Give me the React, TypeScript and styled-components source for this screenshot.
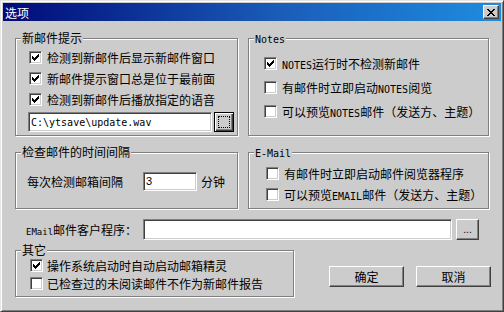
import styled, { createGlobalStyle, css } from 'styled-components'

const FACE = '#cccccc'

const GlobalStyle = createGlobalStyle`
  html, body {
    margin: 0;
    padding: 0;
    background: ${FACE};
  }
  body {
    font-family: "Noto Sans CJK SC", sans-serif;
    font-size: 12px;
    color: #000;
  }
`

const raised = css`
  box-sizing: border-box;
  background: ${FACE};
  border: 1px solid;
  border-color: #fff #404040 #404040 #fff;
  box-shadow: inset -1px -1px 0 #808080, inset 1px 1px 0 ${FACE};
`

const sunken = css`
  box-sizing: border-box;
  background: #fff;
  border: 1px solid;
  border-color: #808080 #fff #fff #808080;
  box-shadow: inset 1px 1px 0 #404040, inset -1px -1px 0 ${FACE};
`

const Window = styled.div`
  width: 504px;
  height: 312px;
  box-sizing: border-box;
  background: ${FACE};
  border: 1px solid;
  border-color: #e4e4e4 #404040 #404040 #e4e4e4;
  box-shadow: inset 1px 1px 0 #fff, inset -1px -1px 0 #808080;
  padding: 2px;
  display: flex;
  flex-direction: column;
`

const TitleBar = styled.div`
  height: 18px;
  flex: none;
  display: flex;
  align-items: center;
  padding: 0 2px 0 2px;
  background: linear-gradient(90deg, #000a78 0%, #1a5cb8 55%, #1e8ce0 100%);
  color: #fff;
  font-size: 12px;
`

const CloseButton = styled.button`
  ${raised};
  width: 16px;
  height: 14px;
  margin-left: auto;
  padding: 0;
  display: flex;
  align-items: center;
  justify-content: center;
`

const Client = styled.div`
  display: flex;
  flex-direction: column;
  padding: 17px 11px 0 12px;
`

const TopGrid = styled.div`
  display: grid;
  grid-template-columns: 223px 241px;
  grid-template-rows: 98px 57px;
  column-gap: 10px;
  row-gap: 16px;
`

const Group = styled.div<{ $pad: string; $width?: number; $height?: number }>`
  position: relative;
  box-sizing: border-box;
  display: flex;
  flex-direction: column;
  padding: ${(p) => p.$pad};
  width: ${(p) => (p.$width ? `${p.$width}px` : 'auto')};
  height: ${(p) => (p.$height ? `${p.$height}px` : 'auto')};
  border: 1px solid #808080;
  box-shadow: 1px 1px 0 #fff, inset 1px 1px 0 #fff;
`

const Legend = styled.span`
  position: absolute;
  top: -7px;
  left: 5px;
  padding: 0 1px;
  background: ${FACE};
  line-height: 12px;
  font-size: 12px;
  white-space: nowrap;
`

const Latin = styled.span<{ $size?: number }>`
  font-family: "DejaVu Sans Mono", "Liberation Mono", monospace;
  font-size: ${(p) => p.$size ?? 10}px;
`

const CheckRow = styled.div<{ $h: number; $gap?: number }>`
  display: flex;
  align-items: center;
  height: ${(p) => p.$h}px;
  gap: ${(p) => p.$gap ?? 5}px;
  white-space: nowrap;
`

const Box = styled.span`
  ${sunken};
  flex: none;
  width: 13px;
  height: 13px;
  display: flex;
  align-items: center;
  justify-content: center;
`

const FileRow = styled.div`
  display: flex;
  align-items: center;
  gap: 2px;
  margin-top: 2px;
  margin-left: -1px;
`

const TextField = styled.input<{ $w: number; $h: number; $mono?: boolean }>`
  ${sunken};
  width: ${(p) => p.$w}px;
  height: ${(p) => p.$h}px;
  margin: 0;
  padding: 0 2px;
  outline: none;
  color: #000;
  font-family: ${(p) =>
    p.$mono ? '"DejaVu Sans Mono", "Liberation Mono", monospace' : '"Liberation Sans", sans-serif'};
  font-size: ${(p) => (p.$mono ? 10 : 11)}px;
`

const FocusButton = styled.button`
  box-sizing: border-box;
  width: 20px;
  height: 20px;
  padding: 0;
  background: ${FACE};
  border: 1px solid #000;
  box-shadow: inset 1px 1px 0 #fff, inset -1px -1px 0 #404040, inset -2px -2px 0 #808080;
  display: flex;
  align-items: center;
  justify-content: center;
`

const FocusRect = styled.span`
  width: 10px;
  height: 10px;
  border: 1px dotted #000;
`

const IntervalRow = styled.div`
  display: flex;
  align-items: center;
  height: 20px;
  white-space: nowrap;
`

const IntervalLabel = styled.span`
  width: 116px;
`

const Unit = styled.span`
  margin-left: 4px;
`

const ClientRow = styled.div`
  display: flex;
  align-items: center;
  margin-top: 10px;
  padding-left: 11px;
  white-space: nowrap;
`

const ClientLabel = styled.span`
  width: 117px;
`

const DotsButton = styled.button`
  ${raised};
  width: 23px;
  height: 21px;
  margin-left: 4px;
  padding: 0 0 4px;
  font-family: "Liberation Sans", sans-serif;
  font-size: 10px;
  line-height: 1;
  display: flex;
  align-items: flex-end;
  justify-content: center;
`

const BottomRow = styled.div`
  display: flex;
  margin-top: 10px;
`

const Actions = styled.div`
  display: flex;
  gap: 12px;
  margin-left: auto;
  margin-top: 16px;
  margin-right: -1px;
  align-self: flex-start;
`

const PushButton = styled.button`
  ${raised};
  width: 75px;
  height: 21px;
  padding: 0;
  font-family: "Noto Sans CJK SC", sans-serif;
  font-size: 12px;
  color: #000;
`

const CheckMark = () => (
  <svg width="7" height="7" viewBox="0 0 7 7" shapeRendering="crispEdges">
    <path
      d="M0 2h1v3H0zM1 3h1v3H1zM2 4h1v3H2zM3 3h1v3H3zM4 2h1v3H4zM5 1h1v3H5zM6 0h1v3H6z"
      fill="#000"
    />
  </svg>
)

const CloseGlyph = () => (
  <svg width="8" height="7" viewBox="0 0 8 7" shapeRendering="crispEdges">
    <path
      d="M0 0h2v1H0zM6 0h2v1H6zM1 1h2v1H1zM5 1h2v1H5zM2 2h4v1H2zM3 3h2v1H3zM2 4h4v1H2zM1 5h2v1H1zM5 5h2v1H5zM0 6h2v1H0zM6 6h2v1H6z"
      fill="#000"
    />
  </svg>
)

const Check = ({
  checked,
  h,
  gap,
  children,
}: {
  checked?: boolean
  h: number
  gap?: number
  children: React.ReactNode
}) => (
  <CheckRow $h={h} $gap={gap}>
    <Box>{checked && <CheckMark />}</Box>
    <span>{children}</span>
  </CheckRow>
)

export default function App() {
  return (
    <>
      <GlobalStyle />
      <Window>
        <TitleBar>
          选项
          <CloseButton>
            <CloseGlyph />
          </CloseButton>
        </TitleBar>
        <Client>
          <TopGrid>
            <Group $pad="8px 0 0 13px">
              <Legend>新邮件提示</Legend>
              <Check checked h={21}>检测到新邮件后显示新邮件窗口</Check>
              <Check checked h={21}>新邮件提示窗口总是位于最前面</Check>
              <Check checked h={21}>检测到新邮件后播放指定的语音</Check>
              <FileRow>
                <TextField $w={184} $h={20} $mono readOnly value={'C:\\ytsave\\update.wav'} />
                <FocusButton>
                  <FocusRect />
                </FocusButton>
              </FileRow>
            </Group>
            <Group $pad="12px 0 0 15px">
              <Legend>
                <Latin>Notes</Latin>
              </Legend>
              <Check checked h={24}>
                <Latin>NOTES</Latin>运行时不检测新邮件
              </Check>
              <Check h={24}>
                有邮件时立即启动<Latin>NOTES</Latin>阅览
              </Check>
              <Check h={24}>
                可以预览<Latin>NOTES</Latin>邮件（发送方、主题）
              </Check>
            </Group>
            <Group $pad="18px 0 0 11px">
              <Legend>检查邮件的时间间隔</Legend>
              <IntervalRow>
                <IntervalLabel>每次检测邮箱间隔</IntervalLabel>
                <TextField $w={54} $h={19} readOnly value="3" />
                <Unit>分钟</Unit>
              </IntervalRow>
            </Group>
            <Group $pad="10px 0 0 17px">
              <Legend>
                <Latin>E-Mail</Latin>
              </Legend>
              <Check h={21}>有邮件时立即启动邮件阅览器程序</Check>
              <Check h={21}>
                可以预览<Latin>EMAIL</Latin>邮件（发送方、主题）
              </Check>
            </Group>
          </TopGrid>
          <ClientRow>
            <ClientLabel>
              <Latin $size={9}>EMail</Latin>邮件客户程序：
            </ClientLabel>
            <TextField $w={309} $h={21} readOnly value="" />
            <DotsButton>...</DotsButton>
          </ClientRow>
          <BottomRow>
            <Group $pad="5px 0 0 14px" $width={279} $height={47}>
              <Legend>其它</Legend>
              <Check checked h={18} gap={4}>操作系统启动时自动启动邮箱精灵</Check>
              <Check h={18} gap={4}>已检查过的未阅读邮件不作为新邮件报告</Check>
            </Group>
            <Actions>
              <PushButton>确定</PushButton>
              <PushButton>取消</PushButton>
            </Actions>
          </BottomRow>
        </Client>
      </Window>
    </>
  )
}
